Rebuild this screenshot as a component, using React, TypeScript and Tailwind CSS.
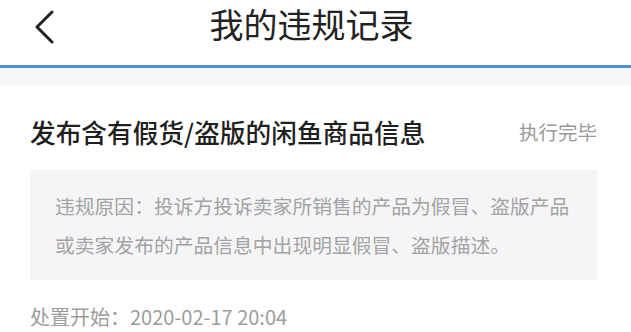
import React from "react";

const cjk = { fontFamily: '"Noto Sans CJK SC", "Noto Sans", sans-serif' };

const BackIcon: React.FC = () => (
  <svg width="24" height="34" viewBox="0 0 24 34" fill="none">
    <path
      d="M20 2 L5 17 L20 32"
      stroke="#222"
      strokeWidth="3"
      strokeLinecap="round"
      strokeLinejoin="round"
    />
  </svg>
);

const App: React.FC = () => {
  return (
    <div className="h-[332px] w-[631px] overflow-hidden bg-white" style={cjk}>
      {/* nav */}
      <div className="grid h-[65px] grid-cols-[1fr_auto_1fr] items-center">
        <div className="pl-[32px] pb-[12px]">
          <BackIcon />
        </div>
        <h1 className="pr-[8px] pb-[18px] text-[34px] leading-none font-normal text-[#222]">
          我的违规记录
        </h1>
        <div />
      </div>
      <div className="h-[3px] bg-[#4a8ddb]" />
      <div className="h-[17px] bg-[#f6f7f9]" />

      {/* card */}
      <div className="pr-[34px] pl-[30px] pt-[32px]">
        <div className="flex items-center justify-between">
          <span className="text-[25.7px] leading-[30px] font-medium text-[#1f1f1f]">
            发布含有假货/盗版的闲鱼商品信息
          </span>
          <span className="text-[19.5px] leading-[30px] text-[#9a9a9a]">执行完毕</span>
        </div>

        <div className="mt-[23px] bg-[#f5f5f7] py-[16px] pl-[25px] text-[19.8px] leading-[39px] whitespace-nowrap text-[#a3a3a3]">
          违规原因：投诉方投诉卖家所销售的产品为假冒、盗版产品
          <br />
          或卖家发布的产品信息中出现明显假冒、盗版描述。
        </div>

        <div className="mt-[24px] text-[20px] leading-[26px] text-[#9c9c9c]">
          处置开始：2020-02-17 20:04
        </div>
      </div>
    </div>
  );
};

export default App;
